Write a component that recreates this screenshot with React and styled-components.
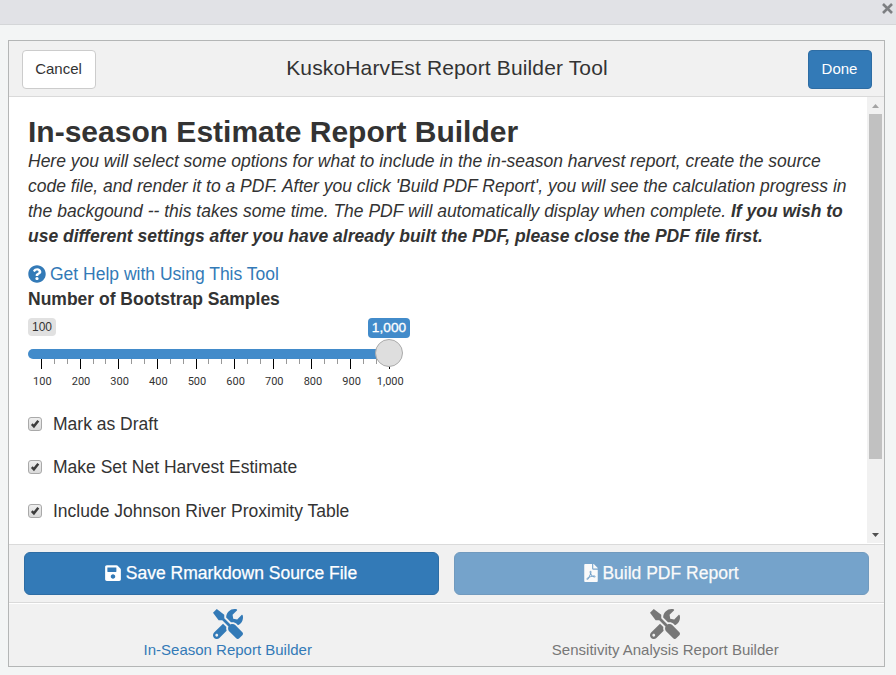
import React from 'react';
import styled, { createGlobalStyle } from 'styled-components';
import { FaSave, FaFilePdf, FaTools, FaQuestionCircle } from 'react-icons/fa';

const GlobalStyle = createGlobalStyle`
  * { box-sizing: border-box; }
  body {
    margin: 0;
    background: #f3f5f5;
    font-family: "Liberation Sans", Arial, sans-serif;
    color: #333;
    overflow: hidden;
  }
`;

const Window = styled.div`
  height: 675px;
  display: flex;
  flex-direction: column;
`;

const TitleStrip = styled.div`
  height: 25px;
  display: flex;
  justify-content: flex-end;
  padding: 3px 3px 0 0;
  background: #e1e2e6;
  border-bottom: 1px solid #d4d6d8;
`;

const Gadget = styled.main`
  width: 877px;
  height: 627px;
  margin: 15px 0 0 8px;
  display: flex;
  flex-direction: column;
  border: 1px solid #b4b6b6;
  background: #fff;
`;

const Header = styled.header`
  height: 56px;
  flex: none;
  display: grid;
  grid-template-columns: 1fr auto 1fr;
  align-items: center;
  padding: 1px 12px 0 13px;
  background: #f1f1f1;
  border-bottom: 1px solid #dadada;
`;

const HeaderButton = styled.button`
  justify-self: ${(p) => (p.$primary ? 'end' : 'start')};
  width: ${(p) => (p.$primary ? 64 : 74)}px;
  height: 39px;
  padding: 0 1px 2px 0;
  border: 1px solid ${(p) => (p.$primary ? '#2e6da4' : '#ccc')};
  border-radius: 4px;
  background: ${(p) => (p.$primary ? '#337ab7' : '#fff')};
  color: ${(p) => (p.$primary ? '#fff' : '#333')};
  font: 15px "Liberation Sans", Arial, sans-serif;
`;

const Title = styled.h1`
  margin: 0;
  padding: 0 0 3px;
  font-size: 21px;
  font-weight: 400;
  letter-spacing: 0.14px;
  white-space: nowrap;
`;

const Body = styled.div`
  height: 447px;
  flex: none;
  display: flex;
  justify-content: space-between;
  overflow: hidden;
`;

const Content = styled.section`
  flex: 1;
  padding: 17px 0 0 19px;
  white-space: nowrap;
  font-size: 17.5px;
`;

const Heading = styled.h2`
  margin: 0;
  font-size: 30px;
  line-height: 35px;
  font-weight: 700;
`;

const Line = styled.div`
  height: 25px;
  line-height: 25px;
  font-style: italic;
`;

const HelpLink = styled.a`
  display: flex;
  align-items: center;
  gap: 4px;
  height: 25px;
  margin-top: 13px;
  color: #337ab7;
  svg { margin-bottom: 2px; }
`;

const SliderLabel = styled.label`
  display: block;
  height: 25px;
  line-height: 25px;
  font-weight: 700;
`;

const Slider = styled.div`
  width: 382px;
  height: 76px;
  margin-top: 6px;
`;

const Badges = styled.div`
  display: flex;
  justify-content: space-between;
  height: 31px;
`;

const Badge = styled.span`
  width: ${(p) => (p.$active ? 42 : 28)}px;
  height: ${(p) => (p.$active ? 20 : 18)}px;
  line-height: ${(p) => (p.$active ? 19 : 18)}px;
  border-radius: 4px;
  text-align: center;
  font-size: ${(p) => (p.$active ? 13.7 : 12)}px;
  background: ${(p) => (p.$active ? '#428bca' : '#e1e1e1')};
  color: ${(p) => (p.$active ? '#fff' : '#333')};
  -webkit-text-stroke: ${(p) => (p.$active ? '0.3px #fff' : '0')};
`;

const Track = styled.div`
  position: relative;
  width: 361px;
  height: 10px;
  background: #428bca;
  border-radius: 5px 0 0 5px;
`;

const Handle = styled.span`
  position: absolute;
  right: -14px;
  top: -10px;
  width: 28px;
  height: 28px;
  border: 1px solid #ababab;
  border-radius: 50%;
  background: #dedede;
`;

const Ticks = styled.div`
  display: flex;
  justify-content: space-between;
  width: 349px;
  height: 11px;
  margin-left: 13px;
`;

const Tick = styled.span`
  width: 1px;
  height: ${(p) => (p.$major ? 10 : 5)}px;
  background: ${(p) => (p.$major ? '#000' : '#999')};
`;

const TickLabels = styled.div`
  display: grid;
  grid-template-columns: repeat(10, 1fr);
  width: 386.6px;
  margin: 5px 0 0 -5px;
  font: 11px/14px Roboto, sans-serif;
  text-align: center;
`;

const CheckRow = styled.label`
  display: flex;
  align-items: center;
  height: 25px;
  margin-bottom: 18.4px;
`;

const Checks = styled.div`
  margin-top: 18px;
`;

const Box = styled.span`
  width: 14px;
  height: 14px;
  margin: 0 11px 1px 0;
  border: 1px solid #a9a9a9;
  border-radius: 3px;
  background: linear-gradient(#eeeeee, #dadada);
  display: flex;
`;

const ScrollBar = styled.div`
  width: 17px;
  flex: none;
  height: 446px;
  padding: 0 2px;
  display: flex;
  flex-direction: column;
  background: #f1f1f1;
`;

const ScrollArrow = styled.div`
  height: 17px;
  display: flex;
  align-items: center;
  justify-content: center;
  padding-top: 1px;
`;

const Thumb = styled.div`
  height: 345px;
  background: #c1c1c1;
`;

const Gap = styled.div`
  flex: 1;
`;

const Actions = styled.div`
  height: 59px;
  flex: none;
  display: flex;
  gap: 15px;
  padding: 7px 15px 0;
  background: #f1f1f1;
  border-top: 1px solid #dadada;
  border-bottom: 1px solid #dadada;
`;

const ActionButton = styled.button`
  flex: 1;
  height: 43px;
  padding: 0 2px 1px 0;
  display: flex;
  align-items: center;
  justify-content: center;
  gap: ${(p) => (p.$muted ? 2 : 4)}px;
  border: 1px solid #2e6da4;
  border-radius: 6px;
  background: #337ab7;
  color: #fff;
  opacity: ${(p) => (p.$muted ? 0.65 : 1)};
  font: 17.5px "Liberation Sans", Arial, sans-serif;
  -webkit-text-stroke: 0.25px #fff;
  svg { margin-bottom: 1px; }
`;

const Tabs = styled.nav`
  flex: 1;
  display: flex;
  border-top: 1px solid #fff;
  background: #f1f1f1;
`;

const Tab = styled.a`
  flex: 1;
  display: flex;
  flex-direction: column;
  align-items: center;
  padding-top: 5px;
  font-size: 15px;
  line-height: 20px;
  color: ${(p) => (p.$active ? '#337ab7' : '#777')};
  svg { margin-bottom: 1px; }
`;

const CheckMark = () => (
  <svg width="12" height="12" viewBox="0 0 12 12">
    <path d="M2.8 6.2 L4.9 8.3 L9.3 2.8" fill="none" stroke="#3c3c3c" strokeWidth="2.5" />
  </svg>
);

const options = ['Mark as Draft', 'Make Set Net Harvest Estimate', 'Include Johnson River Proximity Table'];
const stops = ['100', '200', '300', '400', '500', '600', '700', '800', '900', '1,000'];

export default function App() {
  return (
    <Window>
      <GlobalStyle />
      <TitleStrip>
        <svg width="11" height="11" viewBox="0 0 11 11">
          <path d="M1 1 L10 10 M10 1 L1 10" stroke="#7d7f82" strokeWidth="2.6" />
        </svg>
      </TitleStrip>
      <Gadget>
        <Header>
          <HeaderButton>Cancel</HeaderButton>
          <Title>KuskoHarvEst Report Builder Tool</Title>
          <HeaderButton $primary>Done</HeaderButton>
        </Header>
        <Body>
          <Content>
            <Heading>In-season Estimate Report Builder</Heading>
            <Line>Here you will select some options for what to include in the in-season harvest report, create the source</Line>
            <Line>code file, and render it to a PDF. After you click 'Build PDF Report', you will see the calculation progress in</Line>
            <Line>the backgound -- this takes some time. The PDF will automatically display when complete. <b>If you wish to</b></Line>
            <Line><b>use different settings after you have already built the PDF, please close the PDF file first.</b></Line>
            <HelpLink><FaQuestionCircle size={18} />Get Help with Using This Tool</HelpLink>
            <SliderLabel>Number of Bootstrap Samples</SliderLabel>
            <Slider>
              <Badges>
                <Badge>100</Badge>
                <Badge $active>1,000</Badge>
              </Badges>
              <Track><Handle /></Track>
              <Ticks>
                {Array.from({ length: 28 }, (_, i) => <Tick key={i} $major={i % 3 === 0} />)}
              </Ticks>
              <TickLabels>
                {stops.map((s) => <span key={s}>{s}</span>)}
              </TickLabels>
            </Slider>
            <Checks>
              {options.map((o) => (
                <CheckRow key={o}><Box><CheckMark /></Box>{o}</CheckRow>
              ))}
            </Checks>
          </Content>
          <ScrollBar>
            <ScrollArrow>
              <svg width="7" height="4" viewBox="0 0 7 4"><path d="M0 4 L3.5 0 L7 4Z" fill="#a3a3a3" /></svg>
            </ScrollArrow>
            <Thumb />
            <Gap />
            <ScrollArrow>
              <svg width="7" height="4" viewBox="0 0 7 4"><path d="M0 0 L3.5 4 L7 0Z" fill="#505050" /></svg>
            </ScrollArrow>
          </ScrollBar>
        </Body>
        <Actions>
          <ActionButton><FaSave size={18} />Save Rmarkdown Source File</ActionButton>
          <ActionButton $muted><FaFilePdf size={18} />Build PDF Report</ActionButton>
        </Actions>
        <Tabs>
          <Tab $active><FaTools size={30} />In-Season Report Builder</Tab>
          <Tab><FaTools size={30} />Sensitivity Analysis Report Builder</Tab>
        </Tabs>
      </Gadget>
    </Window>
  );
}
